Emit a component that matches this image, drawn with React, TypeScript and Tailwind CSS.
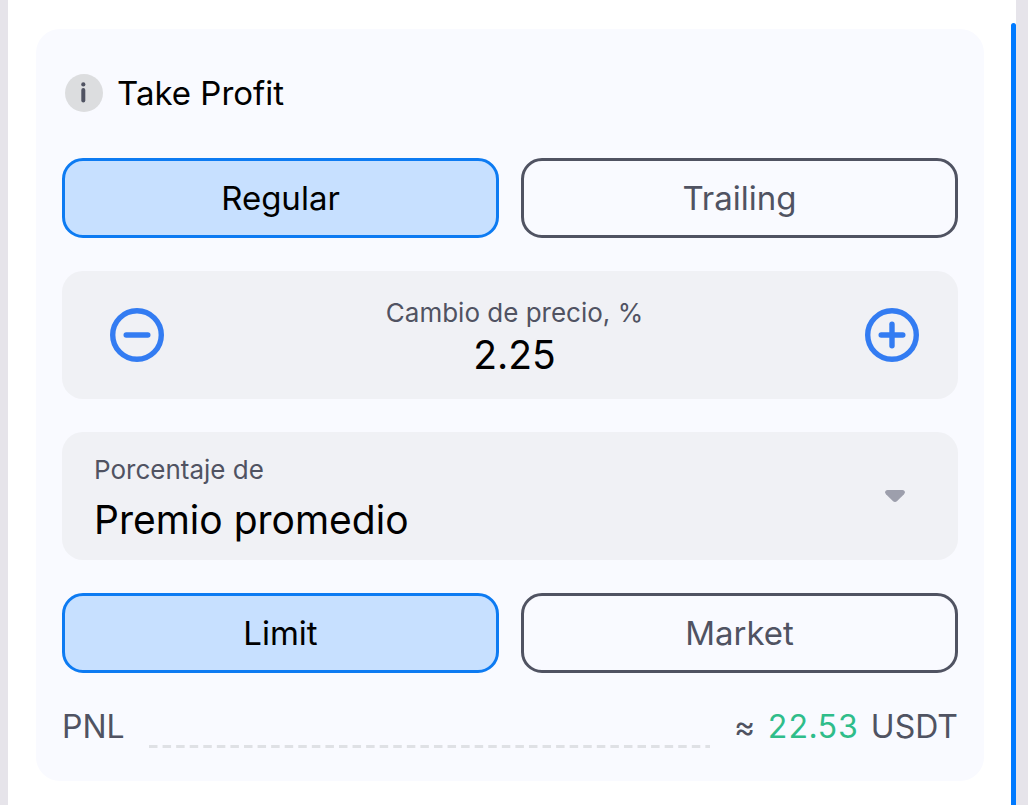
import { useState } from "react";
import { clsx } from "clsx";

type SegmentedProps = {
  label: string;
  options: readonly string[];
  value: string;
  onChange: (value: string) => void;
};

function Segmented({ label, options, value, onChange }: SegmentedProps) {
  return (
    <div role="group" aria-label={label} className="grid grid-cols-2 gap-[22px]">
      {options.map((option) => (
        <button
          key={option}
          type="button"
          aria-pressed={option === value}
          onClick={() => onChange(option)}
          className={clsx(
            "rounded-[21px] border-3 py-[17px] text-[33px] leading-10",
            option === value
              ? "border-[#0d7bf2] bg-[#c7e0ff] text-black"
              : "border-[#505362] text-[#505362]",
          )}
        >
          {option}
        </button>
      ))}
    </div>
  );
}

function StepIcon({ plus = false }: { plus?: boolean }) {
  return (
    <svg
      viewBox="0 0 54 54"
      className="size-[54px]"
      fill="none"
      stroke="#337cf2"
      strokeWidth="5.4"
      strokeLinecap="round"
      aria-hidden="true"
    >
      <circle cx="27" cy="27" r="24.3" />
      <path d="M16.2 27h21.6" />
      {plus && <path d="M27 16.2v21.6" />}
    </svg>
  );
}

export default function App() {
  const [mode, setMode] = useState("Regular");
  const [orderType, setOrderType] = useState("Limit");
  const [change, setChange] = useState("2.25");

  const step = (delta: number) =>
    setChange((current) => ((Number(current) || 0) + delta).toFixed(2));

  return (
    <div className="flex min-h-screen bg-[#e6e4ea] pr-3 pl-2 font-['Inter',sans-serif]">
      <main className="min-w-0 flex-1 bg-white pt-[29px] pr-[27px] pb-6 pl-7">
        <section className="flex flex-col gap-[33px] rounded-3xl bg-[#f9faff] px-[26px] pt-11 pb-[33px]">
          <div className="flex items-center gap-[14px] pb-3 pl-[3px]">
            <button type="button" aria-label="Info" className="shrink-0">
              <svg viewBox="0 0 38 38" className="size-[38px]" aria-hidden="true">
                <circle cx="19" cy="19" r="19" fill="#dcdddf" />
                <circle cx="18.3" cy="10.4" r="2.1" fill="#505362" />
                <rect x="16.3" y="14" width="4" height="14.5" rx="2" fill="#505362" />
              </svg>
            </button>
            <h1 className="text-[33px] leading-10 text-black">Take Profit</h1>
          </div>

          <Segmented
            label="Take Profit"
            options={["Regular", "Trailing"]}
            value={mode}
            onChange={setMode}
          />

          <div className="flex items-center justify-between rounded-[21px] bg-[#f0f1f5] pr-[39px] pl-12">
            <button type="button" aria-label="-" onClick={() => step(-0.05)}>
              <StepIcon />
            </button>
            <div className="flex min-w-0 flex-1 flex-col items-center pt-6 pb-5">
              <label htmlFor="change" className="text-[26px] leading-9 text-[#505362]">
                Cambio de precio, %
              </label>
              <input
                id="change"
                type="text"
                inputMode="decimal"
                value={change}
                onChange={(e) => setChange(e.target.value)}
                className="h-12 w-full bg-transparent text-center text-[39px] text-black outline-none"
              />
            </div>
            <button type="button" aria-label="+" onClick={() => step(0.05)}>
              <StepIcon plus />
            </button>
          </div>

          <div className="flex items-center rounded-[21px] bg-[#f0f1f5] pr-[53px] pl-8">
            <div className="flex min-w-0 flex-1 flex-col pt-5 pb-2">
              <label htmlFor="base" className="text-[26px] leading-9 text-[#505362]">
                Porcentaje de
              </label>
              <select
                id="base"
                className="h-16 w-full appearance-none bg-transparent text-[39px] text-black outline-none"
              >
                <option>Premio promedio</option>
              </select>
            </div>
            <svg
              viewBox="0 0 20 12"
              className="pointer-events-none h-3 w-5 shrink-0"
              fill="#9d9fac"
              aria-hidden="true"
            >
              <path d="M2.5 0h15C19.8 0 20.6 2.5 19 4.2L12.2 10.9Q10 13 7.800 10.9L1 4.2C-.6 2.5.2 0 2.5 0Z" />
            </svg>
          </div>

          <Segmented
            label="Limit / Market"
            options={["Limit", "Market"]}
            value={orderType}
            onChange={setOrderType}
          />

          <div className="flex items-end gap-6 text-[32px] leading-[42px] text-[#505362]">
            <span>PNL</span>
            <svg className="h-[3px] min-w-0 flex-1" aria-hidden="true">
              <line
                x1="0"
                y1="1.5"
                x2="100%"
                y2="1.5"
                stroke="#dfe1e5"
                strokeWidth="3"
                strokeDasharray="8.5 5.07"
              />
            </svg>
            <span className="flex gap-3 whitespace-nowrap">
              <span>≈</span>
              <span className="text-[#2fbd8a] tabular-nums">22.53</span>
              <span>USDT</span>
            </span>
          </div>
        </section>
      </main>
      <div className="flex w-[5px] bg-white pt-[23px]">
        <div className="w-full rounded-t-full bg-[#007aff]" />
      </div>
    </div>
  );
}
